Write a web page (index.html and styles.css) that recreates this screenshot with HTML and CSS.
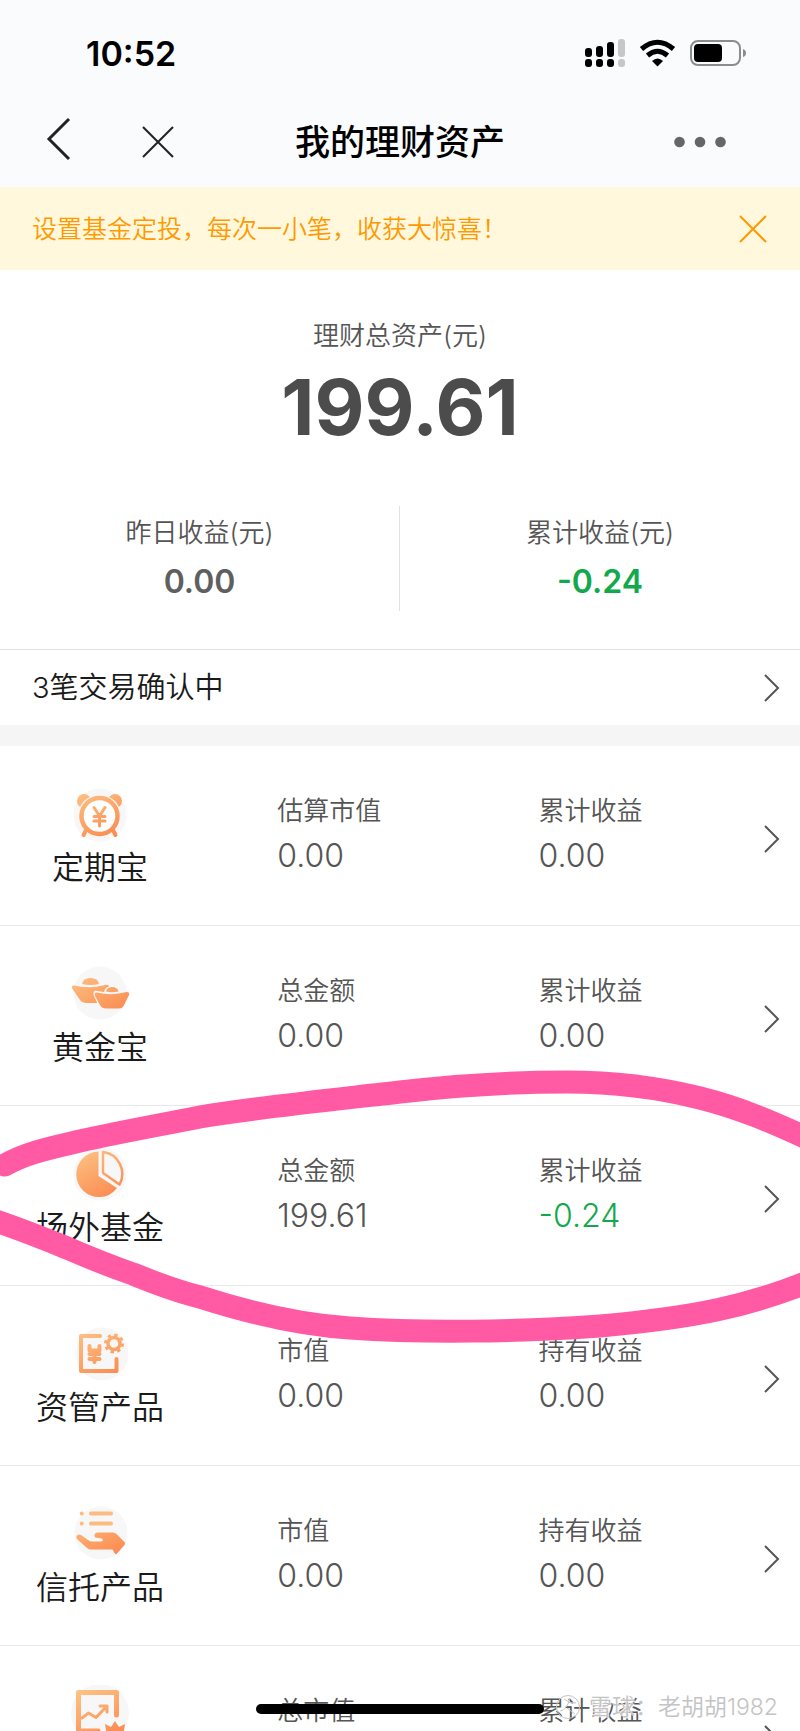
FILE: index.html
```html
<!DOCTYPE html>
<html lang="zh-CN">
<head>
    <meta charset="UTF-8">
    <meta name="viewport" content="width=device-width, initial-scale=1.0">
    <title>我的理财资产</title>
    <link rel="stylesheet" href="styles.css">
</head>
<body>
    <svg class="defs" width="0" height="0" aria-hidden="true">
        <defs>
            <linearGradient id="orange" gradientUnits="userSpaceOnUse" x1="15" y1="4" x2="40" y2="52">
                <stop offset="0" stop-color="#fdc183"/>
                <stop offset="1" stop-color="#fb8c52"/>
            </linearGradient>
        </defs>
    </svg>

    <div class="app">
        <header class="header">
            <div class="status-bar">
                <span class="time">10:52</span>
                <svg class="signal" width="162" height="28" viewBox="0 0 162 28" aria-hidden="true">
                    <rect x="1" y="9" width="7" height="9" rx="3"/>
                    <rect x="12" y="7" width="7" height="11" rx="3"/>
                    <rect x="23" y="3" width="7" height="15" rx="3"/>
                    <rect x="34" y="0" width="7" height="18" rx="3" fill="#c6c7c9"/>
                    <rect x="1" y="20" width="7" height="8" rx="3"/>
                    <rect x="12" y="20" width="7" height="8" rx="3"/>
                    <rect x="23" y="20" width="7" height="8" rx="3"/>
                    <rect x="34" y="20" width="7" height="8" rx="3" fill="#c6c7c9"/>
                    <path d="M57.500 10Q73.500 -3.500 89.500 10" fill="none" stroke="#000" stroke-width="5"/>
                    <path d="M63.500 16.500Q73.500 8 83.500 16.500" fill="none" stroke="#000" stroke-width="5"/>
                    <path d="M68 22Q73.500 17 79 22L73.500 27.500Z"/>
                    <rect x="107" y="2" width="49" height="24" rx="7" fill="none" stroke="#8b8c8e" stroke-width="2"/>
                    <rect x="110" y="5" width="28" height="18" rx="4"/>
                    <path d="M159 10Q162 11 162 14Q162 17 159 18Z" fill="#8b8c8e"/>
                </svg>
            </div>
            <nav class="nav-bar">
                <div class="nav-left">
                    <button type="button" class="icon-btn" aria-label="返回">
                        <svg width="26" height="50" viewBox="0 0 26 50"><path d="M23 2L3 22L23 42"/></svg>
                    </button>
                    <button type="button" class="icon-btn thin" aria-label="关闭">
                        <svg width="32" height="32" viewBox="0 0 32 32"><path d="M1 1L31 31M31 1L1 31"/></svg>
                    </button>
                </div>
                <h1>我的理财资产</h1>
                <button type="button" class="icon-btn more" aria-label="更多">
                    <svg width="52" height="12" viewBox="0 0 52 12">
                        <circle cx="5.500" cy="6" r="5.300"/><circle cx="26" cy="6" r="5.300"/><circle cx="46.500" cy="6" r="5.300"/>
                    </svg>
                </button>
            </nav>
        </header>

        <div class="notice">
            <p>设置基金定投，每次一小笔，收获大惊喜！</p>
            <button type="button" class="icon-btn" aria-label="关闭提示">
                <svg width="28" height="28" viewBox="0 0 28 28"><path d="M1 1L27 27M27 1L1 27"/></svg>
            </button>
        </div>

        <section class="summary">
            <p class="label">理财总资产(元)</p>
            <p class="total">199.61</p>
            <div class="earnings">
                <div class="earning">
                    <p class="label">昨日收益(元)</p>
                    <p class="amount">0.00</p>
                </div>
                <div class="earning">
                    <p class="label">累计收益(元)</p>
                    <p class="amount down">-0.24</p>
                </div>
            </div>
        </section>

        <a class="pending" href="#">
            <span>3笔交易确认中</span>
            <svg class="chevron" width="16" height="28" viewBox="0 0 16 28"><path d="M1 1L14 14L1 27"/></svg>
        </a>

        <main class="list">
            <a class="item" href="#">
                <div class="product">
                    <svg width="60" height="60" viewBox="0 0 60 60">
                        <circle class="disc" cx="30" cy="30" r="26.500"/>
                        <circle class="fill" cx="14" cy="16" r="7"/>
                        <circle class="fill" cx="45" cy="16" r="7"/>
                        <circle cx="29.500" cy="31" r="21.500" fill="#f7f7f7"/>
                        <path class="line" stroke-width="4" d="M16 45L13.500 50M43 45L45.500 50"/>
                        <circle cx="29.500" cy="31" r="18" fill="#fff" stroke="url(#orange)" stroke-width="4.500"/>
                        <path class="line" stroke-width="3" d="M24 22.500L29.500 31L35 22.500M29.500 31V41M24 31.500H35M24 36H35"/>
                    </svg>
                    <span class="name">定期宝</span>
                </div>
                <div class="figure"><span class="label">估算市值</span><span class="value">0.00</span></div>
                <div class="figure"><span class="label">累计收益</span><span class="value">0.00</span></div>
                <svg class="chevron" width="16" height="28" viewBox="0 0 16 28"><path d="M1 1L14 14L1 27"/></svg>
            </a>

            <a class="item" href="#">
                <div class="product">
                    <svg width="60" height="60" viewBox="0 0 60 60">
                        <circle class="disc" cx="30" cy="28" r="26.500"/>
                        <path class="fill" d="M12 19Q13 13 20.500 13Q28 13 29 19Q20.500 21 12 19Z"/>
                        <path class="fill" d="M4 20.500Q20 24 33 20.500Q38 19 39 21V38H17Q12 38 10 35L2.500 24Q1 20 4 20.500Z"/>
                        <path d="M34 27Q35 21 42 21Q49 21 50 26L57 25.500Q61 26 59.500 30L55 41Q53 45 49 45H35Q31 45 29 42L24 31Q22 25 27 26Z" fill="#f7f7f7"/>
                        <path class="fill" d="M36 26.500Q37 22 42 22Q47.500 22 48.500 26.500Q42 28 36 26.500Z"/>
                        <path class="fill" d="M27 27.500Q42 31 56.500 27Q60 27 59 30L54 40Q52.500 43.500 48.500 43.500H36Q32 43.500 30 40L25 31Q24 27 27 27.500Z"/>
                    </svg>
                    <span class="name">黄金宝</span>
                </div>
                <div class="figure"><span class="label">总金额</span><span class="value">0.00</span></div>
                <div class="figure"><span class="label">累计收益</span><span class="value">0.00</span></div>
                <svg class="chevron" width="16" height="28" viewBox="0 0 16 28"><path d="M1 1L14 14L1 27"/></svg>
            </a>

            <a class="item marked" href="#">
                <div class="product">
                    <svg width="60" height="60" viewBox="0 0 60 60">
                        <circle class="disc" cx="30" cy="29" r="26.500"/>
                        <path class="fill" d="M28.500 6.500V31L47 43Q40 52 29.500 52A22.700 22.700 0 0 1 28.500 6.500Z"/>
                        <path class="line" stroke-width="2.500" d="M33 7V28L49.500 39.500A22 22 0 0 0 33 7Z"/>
                    </svg>
                    <span class="name">场外基金</span>
                </div>
                <div class="figure"><span class="label">总金额</span><span class="value">199.61</span></div>
                <div class="figure"><span class="label">累计收益</span><span class="value down">-0.24</span></div>
                <svg class="chevron" width="16" height="28" viewBox="0 0 16 28"><path d="M1 1L14 14L1 27"/></svg>
                <!-- hand-drawn marker around the fund row -->
                <svg class="marker" viewBox="0 0 800 290" preserveAspectRatio="none" aria-hidden="true">
                    <path d="M5 99C25 87 50 82 80 75C120 66 160 59 200 51C260 41 340 33 400 26C460 19 520 16 567 16C620 16 660 22 700 32C740 42 770 55 820 78"/>
                    <path d="M-10 153C20 163 40 171 67 182C90 192 110 200 133 208C160 219 180 226 200 231C250 247 300 259 350 262C420 267 520 266 600 260C690 252 750 241 820 211"/>
                </svg>
            </a>

            <a class="item" href="#">
                <div class="product">
                    <svg width="60" height="60" viewBox="0 0 60 60">
                        <circle class="disc" cx="32" cy="29" r="26.500"/>
                        <path class="line" stroke-width="4" d="M30 11H11V46H46.500V34"/>
                        <path class="line" stroke-width="4" d="M19.500 21V25.500H29.500V21M24.500 26V37M19.500 29H29.500M19.500 34H29.500"/>
                        <circle cx="44" cy="18.500" r="6" fill="none" stroke="url(#orange)" stroke-width="3.500"/>
                        <circle cx="44" cy="18.500" r="8.500" fill="none" stroke="url(#orange)" stroke-width="3" stroke-dasharray="3.300 3.380"/>
                    </svg>
                    <span class="name">资管产品</span>
                </div>
                <div class="figure"><span class="label">市值</span><span class="value">0.00</span></div>
                <div class="figure"><span class="label">持有收益</span><span class="value">0.00</span></div>
                <svg class="chevron" width="16" height="28" viewBox="0 0 16 28"><path d="M1 1L14 14L1 27"/></svg>
            </a>

            <a class="item" href="#">
                <div class="product">
                    <svg width="60" height="60" viewBox="0 0 60 60">
                        <circle class="disc" cx="31" cy="28" r="26.500"/>
                        <path d="M21 8.500H41M21 18.500H41M11.700 8.500H11.800M11.700 18.500H11.800" fill="none" stroke="#fcbb80" stroke-width="4" stroke-linecap="round"/>
                        <path class="fill" d="M6.500 31Q8 28.500 11 30L18 35Q20 36.500 23 36.500H31Q33.500 36 32.500 34Q31.500 33 28 33Q24.500 33 24.500 30.500Q24.500 27.500 28 27.500H43Q45 27.500 46.500 29L54.500 37Q55.500 38.500 54.500 40L47 48.500Q45.500 50 44.500 48L42.500 44.500H21Q19 44.500 17 43L8 35Q5.500 33 6.500 31Z"/>
                    </svg>
                    <span class="name">信托产品</span>
                </div>
                <div class="figure"><span class="label">市值</span><span class="value">0.00</span></div>
                <div class="figure"><span class="label">持有收益</span><span class="value">0.00</span></div>
                <svg class="chevron" width="16" height="28" viewBox="0 0 16 28"><path d="M1 1L14 14L1 27"/></svg>
            </a>

            <a class="item" href="#">
                <div class="product">
                    <svg width="60" height="60" viewBox="0 0 60 60">
                        <circle class="disc" cx="30" cy="28" r="29"/>
                        <path class="line" stroke-width="5" d="M46.500 30V7.500H8.500V46H28"/>
                        <path class="line" stroke-width="3" d="M12 33L18.500 28L26 32.500L36 22M30 21H37V27"/>
                        <path class="fill" d="M35 39L41 42L45 36L49 42L55 39L53 52H37Z"/>
                    </svg>
                </div>
                <div class="figure"><span class="label">总市值</span></div>
                <div class="figure"><span class="label">累计收益</span></div>
                <svg class="chevron" width="16" height="28" viewBox="0 0 16 28"><path d="M1 1L14 14L1 27"/></svg>
            </a>
        </main>

        <div class="watermark">
            <svg width="26" height="26" viewBox="0 0 26 26" aria-hidden="true">
                <circle cx="13" cy="13" r="11.500"/>
                <path d="M5 17Q12 16 15 4M9 5Q14 10 21 9M12 14L20 20"/>
            </svg>
            <span>雪球：老胡胡1982</span>
        </div>
        <div class="home-indicator"></div>
    </div>
</body>
</html>
```

FILE: styles.css
```css
* {
    margin: 0;
    padding: 0;
    box-sizing: border-box;
}

body {
    background: #fff;
    color: #1a1a1a;
    font-family: 'Inter', 'Noto Sans CJK SC', sans-serif;
    font-weight: 350;
}

a {
    color: inherit;
    text-decoration: none;
}

svg {
    display: block;
    flex-shrink: 0;
}

.defs {
    position: absolute;
}

.app {
    position: relative;
    display: flex;
    flex-direction: column;
    height: 100vh;
    overflow: hidden;
}

/* header */
.header {
    background: #fafbfd;
    color: #000;
}

.status-bar {
    display: flex;
    align-items: center;
    justify-content: space-between;
    height: 106px;
    padding: 0 54px 0 86px;
}

.time {
    font-size: 34px;
    font-weight: 600;
}

.nav-bar {
    display: grid;
    grid-template-columns: 1fr auto 1fr;
    align-items: center;
    height: 81px;
    padding: 0 74px 10px 46px;
}

.nav-left {
    display: flex;
    align-items: center;
    gap: 70px;
}

.nav-bar h1 {
    font-size: 35px;
    font-weight: 500;
    line-height: 50px;
    margin-left: 28px;
}

.icon-btn {
    background: none;
    border: none;
    cursor: pointer;
}

.icon-btn path {
    fill: none;
    stroke: #222;
    stroke-width: 3;
}

.icon-btn.thin path {
    stroke-width: 2;
}

.icon-btn.more {
    justify-self: end;
}

.icon-btn.more circle {
    fill: #666;
}

/* notice */
.notice {
    display: flex;
    align-items: center;
    justify-content: space-between;
    height: 83px;
    padding: 0 33px 0 32px;
    background: #fff8dc;
    color: #f90;
    font-size: 25px;
}

.notice p {
    padding-bottom: 4px;
}

.notice .icon-btn path {
    stroke: #f90;
    stroke-width: 2;
}

/* summary */
.label {
    color: #555;
    font-size: 26px;
}

.down.down {
    color: #12a84c;
}

.summary {
    padding: 44px 0 38px;
    text-align: center;
    border-bottom: 1px solid #e2e2e2;
}

.summary .label {
    line-height: 44px;
}

.total {
    color: #4c4c4c;
    font-size: 77px;
    font-weight: 700;
    line-height: 98px;
}

.earnings {
    display: grid;
    grid-template-columns: 1fr 1fr;
    margin-top: 50px;
}

.earning {
    height: 105px;
    padding-top: 5px;
}

.earning:first-child {
    border-right: 1px solid #e2e2e2;
}

.amount {
    color: #5f5f5f;
    font-size: 32px;
    font-weight: 600;
    line-height: 54px;
}

/* pending */
.pending {
    display: flex;
    align-items: center;
    justify-content: space-between;
    padding: 0 20px 0 32px;
    font-size: 29px;
    line-height: 75px;
}

.chevron path {
    fill: none;
    stroke: #555;
    stroke-width: 2;
}

/* list */
.list {
    flex: 1;
    min-height: 0;
    border-top: 21px solid #f5f5f5;
}

.item {
    position: relative;
    display: grid;
    grid-template-columns: 200fr 261fr 302fr 16px;
    height: 180px;
    padding-right: 20px;
    border-bottom: 1px solid #e8e8e8;
}

.product {
    display: flex;
    flex-direction: column;
    align-items: center;
    padding-top: 39px;
}

.name {
    font-size: 32px;
    line-height: 45px;
}

.disc {
    fill: #f7f7f7;
}

.fill {
    fill: url(#orange);
}

.line {
    fill: none;
    stroke: url(#orange);
    stroke-linecap: round;
    stroke-linejoin: round;
}

.figure {
    display: flex;
    flex-direction: column;
    padding: 42px 0 0 77px;
    line-height: 45px;
}

.value {
    color: #555;
    font-size: 32px;
}

.item .chevron {
    margin-top: 79px;
}

.marker {
    position: absolute;
    z-index: 1;
    top: -40px;
    left: 0;
    width: 100%;
    height: 290px;
    overflow: hidden;
    pointer-events: none;
}

.marker path {
    fill: none;
    stroke: #ff5aa3;
    stroke-width: 23;
    stroke-linecap: round;
}

/* overlays */
.watermark {
    position: absolute;
    right: 22px;
    bottom: 8px;
    display: flex;
    align-items: center;
    gap: 8px;
    color: #c4c4c4;
    font-size: 23px;
    line-height: 32px;
    text-shadow: 1px 1px 1px #fff, -1px -1px 1px #fff;
}

.watermark svg {
    fill: none;
    stroke: #c4c4c4;
    stroke-width: 1;
}

.home-indicator {
    position: absolute;
    bottom: 17px;
    left: 50%;
    width: 36%;
    height: 10px;
    border-radius: 5px;
    background: #000;
    transform: translateX(-50%);
}
```
